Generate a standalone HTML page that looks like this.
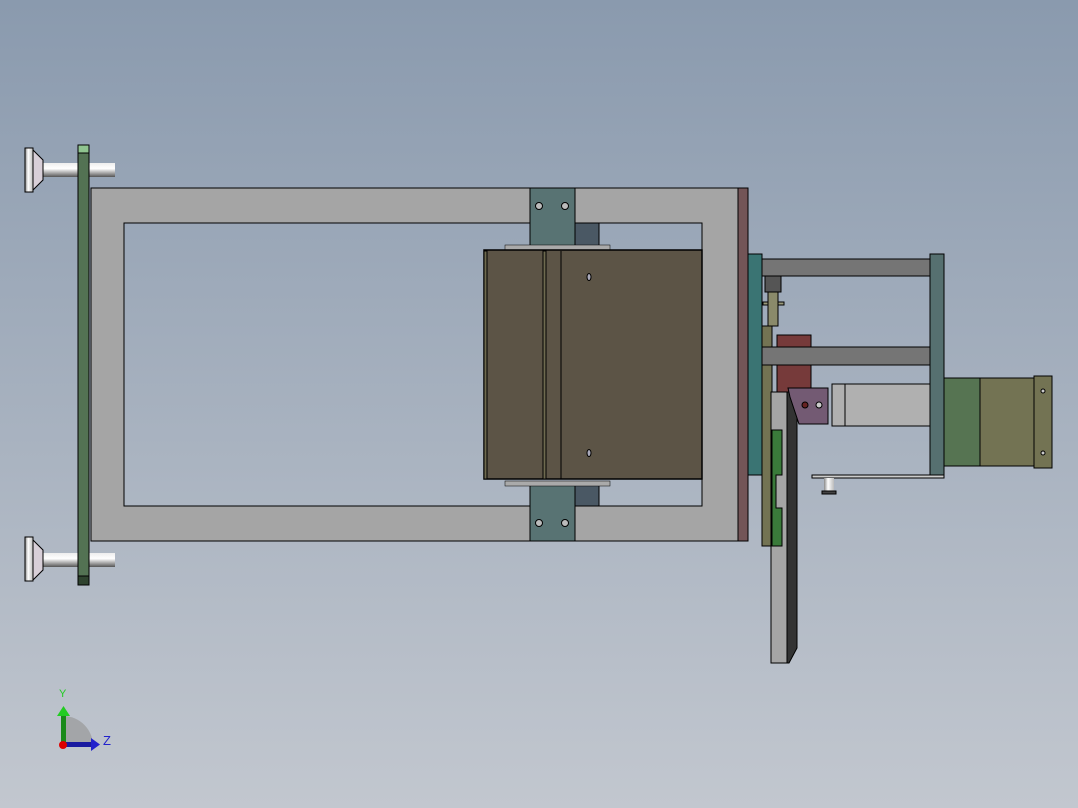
<!DOCTYPE html>
<html><head><style>
html,body{margin:0;padding:0;width:1078px;height:808px;overflow:hidden}
body{background:linear-gradient(#8a9aae,#c2c7cf)}
svg{position:absolute;left:0;top:0}
</style></head><body>
<svg width="1078" height="808" viewBox="0 0 1078 808" stroke="#000" stroke-width="1">
<defs>
<linearGradient id="sh" x1="0" y1="0" x2="0" y2="1"><stop offset="0" stop-color="#eee"/><stop offset=".4" stop-color="#fff"/><stop offset="1" stop-color="#555"/></linearGradient>
<linearGradient id="hd" x1="0" y1="0" x2="1" y2="0"><stop offset="0" stop-color="#888"/><stop offset=".4" stop-color="#fff"/><stop offset="1" stop-color="#bbb"/></linearGradient>
</defs>
<!-- frame -->
<path d="M91 188H738V541H91Z M124 223V506H702V223Z" fill="#a5a5a5" fill-rule="evenodd"/>
<rect x="738" y="188" width="10" height="353" fill="#735557"/>
<!-- knobs -->
<g>
<rect x="43" y="163" width="72" height="14" fill="url(#sh)" stroke="none"/>
<path d="M33 150L43 160V180L33 190Z" fill="#d8cfd8"/>
<rect x="25" y="148" width="8" height="44" fill="url(#hd)"/>
<rect x="43" y="553" width="72" height="14" fill="url(#sh)" stroke="none"/>
<path d="M33 540L43 550V570L33 580Z" fill="#d8cfd8"/>
<rect x="25" y="537" width="8" height="44" fill="url(#hd)"/>
</g>
<rect x="78" y="145" width="11" height="440" fill="#537253"/>
<rect x="78" y="145" width="11" height="8" fill="#8fc48f"/>
<rect x="78" y="576" width="11" height="9" fill="#2f432f"/>
<!-- brackets -->
<rect x="575" y="223" width="24" height="25" fill="#4a5864"/>
<rect x="575" y="485" width="24" height="21" fill="#4a5864"/>
<rect x="530" y="188" width="45" height="60" fill="#587373"/>
<rect x="530" y="485" width="45" height="56" fill="#587373"/>
<circle cx="539" cy="206" r="3.5" fill="#bbb"/><circle cx="565" cy="206" r="3.5" fill="#bbb"/>
<circle cx="539" cy="523" r="3.5" fill="#bbb"/><circle cx="565" cy="523" r="3.5" fill="#bbb"/>
<rect x="505" y="245" width="105" height="5" fill="#aaa" stroke-width=".5"/>
<rect x="505" y="481" width="105" height="5" fill="#aaa" stroke-width=".5"/>
<!-- block -->
<rect x="484" y="250" width="218" height="229" fill="#5c5446" stroke-width="1.5"/>
<rect x="484" y="251" width="3" height="228" fill="#6e6a4f"/>
<rect x="543" y="251" width="3" height="228" fill="#6e6a4f"/>
<line x1="561" y1="251" x2="561" y2="479"/>
<ellipse cx="589" cy="277" rx="2" ry="3.5" fill="#aab"/>
<ellipse cx="589" cy="453" rx="2" ry="3.5" fill="#aab"/>
<!-- right assembly -->
<rect x="748" y="254" width="14" height="221" fill="#3a7473"/>
<rect x="762" y="259" width="168" height="17" fill="#757575"/>
<rect x="930" y="254" width="14" height="221" fill="#567070"/>
<rect x="765" y="276" width="16" height="16" fill="#555"/>
<rect x="763" y="302" width="21" height="3" fill="#9a9a7a"/>
<rect x="768" y="292" width="10" height="34" fill="#8a8a6a"/>
<rect x="762" y="326" width="10" height="220" fill="#737353"/>
<rect x="777" y="335" width="34" height="57" fill="#763a3a"/>
<rect x="762" y="347" width="168" height="18" fill="#757575"/>
<rect x="771" y="392" width="16" height="271" fill="#a5a5a5"/>
<path d="M787 392H793L797 405V648L789 663H787Z" fill="#333"/>
<path d="M772 430H782V475H776V508H782V546H772Z" fill="#3a7a3a"/>
<path d="M788 388H828V424H799L790 397Z" fill="#735a73"/>
<circle cx="805" cy="405" r="3" fill="#622"/><circle cx="819" cy="405" r="3" fill="#ccc"/>
<rect x="832" y="384" width="98" height="42" fill="#b0b0b0"/>
<line x1="845" y1="384" x2="845" y2="426"/>
<rect x="944" y="378" width="36" height="88" fill="#567452"/>
<rect x="980" y="378" width="54" height="88" fill="#737353"/>
<rect x="1034" y="376" width="18" height="92" fill="#737353"/>
<circle cx="1043" cy="391" r="2" fill="#ccc"/><circle cx="1043" cy="453" r="2" fill="#ccc"/>
<rect x="812" y="475" width="132" height="3" fill="#ccc"/>
<rect x="824" y="478" width="10" height="13" fill="url(#hd)" stroke="none"/>
<rect x="822" y="491" width="14" height="3" fill="#444"/>
<!-- triad -->
<g stroke="none">
<path d="M63 716A30 30 0 0 1 93 746H63Z" fill="#999" opacity=".7"/>
<rect x="61" y="716" width="5" height="30" fill="#1a8a1a"/>
<path d="M57 716L63.5 706L70 716Z" fill="#2c2"/>
<rect x="63" y="742" width="28" height="5" fill="#1a1aa0"/>
<path d="M91 738L100 744.5L91 751Z" fill="#22c"/>
<circle cx="63" cy="745" r="4" fill="#d00"/>
</g>
<text x="59" y="697" font-family="Liberation Sans" font-size="11" fill="#2c2" stroke="none">Y</text>
<text x="103" y="745" font-family="Liberation Sans" font-size="13" fill="#22c" stroke="none">Z</text>
</svg>
</body></html>
